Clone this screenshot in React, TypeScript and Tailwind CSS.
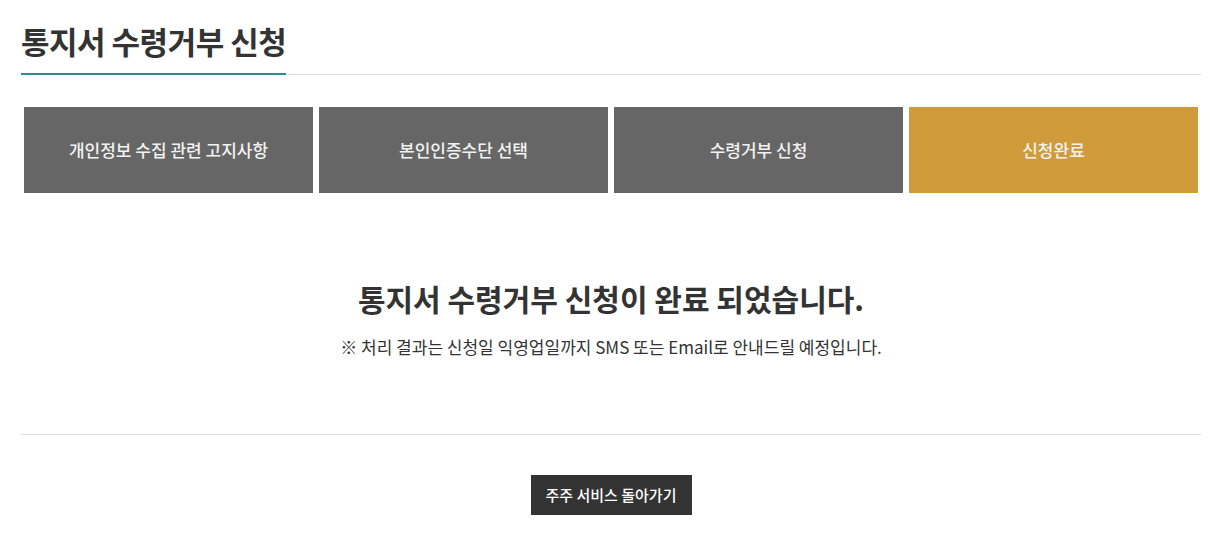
export default function App() {
  const steps = ["개인정보 수집 관련 고지사항", "본인인증수단 선택", "수령거부 신청", "신청완료"];

  return (
    <div
      className="min-h-[555px] bg-white pt-[18px] text-[#333]"
      style={{ fontFamily: '"Noto Sans CJK KR", "Noto Sans", sans-serif' }}
    >
      <div className="ml-[21px] w-[1180px]">
        <div className="border-b border-[#ddd]">
          <h1 className="-mb-px inline-block border-b-2 border-[#2b8f8f] pb-[9px] text-[31px] font-bold leading-[46px] tracking-[-0.5px] text-[#333]">
            통지서 수령거부 신청
          </h1>
        </div>

        <ul className="mt-[32px] flex">
          {steps.map((s, i) => (
            <li key={s} className="w-1/4 px-[3px]">
              <div
                className={
                  "flex h-[86px] items-center justify-center text-[17px] font-medium text-[#f2f2f2] " +
                  (i === steps.length - 1 ? "bg-[#d09b3b]" : "bg-[#666666]")
                }
              >
                {s}
              </div>
            </li>
          ))}
        </ul>

        <div className="border-b border-[#ddd] pt-[83px] pb-[74px] text-center">
          <h2 className="text-[30px] font-bold leading-[44px] text-[#333]">
            통지서 수령거부 신청이 완료 되었습니다.
          </h2>
          <p className="mt-[14px] text-[17px] leading-[26px] text-[#333]">
            ※ 처리 결과는 신청일 익영업일까지 SMS 또는 Email로 안내드릴 예정입니다.
          </p>
        </div>

        <div className="flex justify-center pt-[40px]">
          <button className="h-[40px] w-[161px] bg-[#333] text-[15px] font-medium text-white">
            주주 서비스 돌아가기
          </button>
        </div>
      </div>
    </div>
  );
}
